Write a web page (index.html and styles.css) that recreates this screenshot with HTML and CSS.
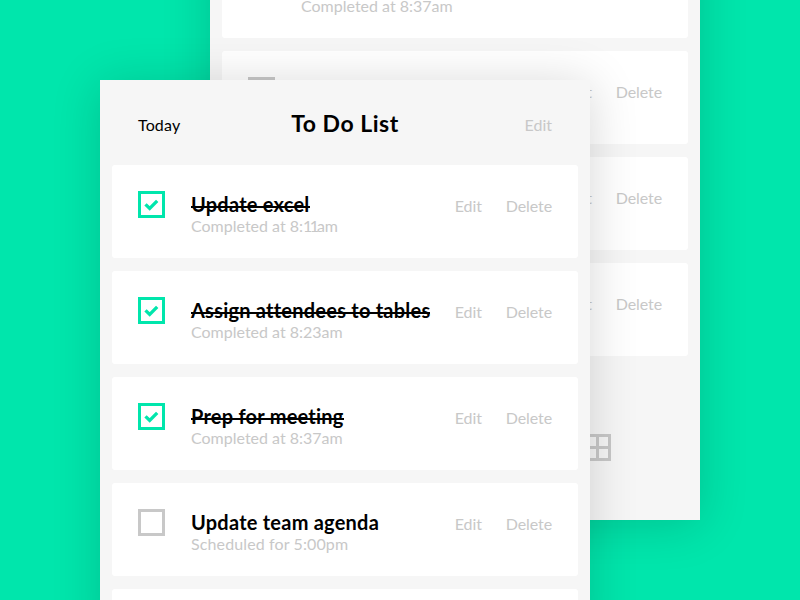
FILE: index.html
```
<!DOCTYPE html>
<html lang="en">
<head>
<meta charset="utf-8">
<title>To Do List</title>
<link rel="stylesheet" href="styles.css">
</head>
<body>
<main class="stage">
  <section class="window window-back">
    <ul class="tasks">
      <li class="task task-cut">
        <div class="info"><p class="time">Completed at 8:37am</p></div>
      </li>
      <li class="task"><span class="box"></span><div class="info"></div><div class="actions"><a>Edit</a><a>Delete</a></div></li>
      <li class="task"><span class="box"></span><div class="info"></div><div class="actions"><a>Edit</a><a>Delete</a></div></li>
      <li class="task"><span class="box"></span><div class="info"></div><div class="actions"><a>Edit</a><a>Delete</a></div></li>
    </ul>
    <footer class="tabs">
      <svg class="grid-icon" viewBox="0 0 27 27"><path d="M1.5 1.5h24v24h-24zM13.5 1.5v24M1.5 13.5h24"/></svg>
    </footer>
  </section>

  <section class="window window-front">
    <header class="header">
      <span class="today">Today</span>
      <h1 class="title">To Do List</h1>
      <a class="edit">Edit</a>
    </header>
    <ul class="tasks">
      <li class="task done">
        <span class="box"><svg class="check" viewBox="0 0 21 21"><path d="M4.5 10.3l4.2 4.2 7.5-7.6"/></svg></span>
        <div class="info"><h2 class="name">Update excel</h2><p class="time">Completed at 8:<span class="ones">11</span>am</p></div>
        <div class="actions"><a>Edit</a><a>Delete</a></div>
      </li>
      <li class="task done">
        <span class="box"><svg class="check" viewBox="0 0 21 21"><path d="M4.5 10.3l4.2 4.2 7.5-7.6"/></svg></span>
        <div class="info"><h2 class="name">Assign attendees to tables</h2><p class="time">Completed at 8:23am</p></div>
        <div class="actions"><a>Edit</a><a>Delete</a></div>
      </li>
      <li class="task done">
        <span class="box"><svg class="check" viewBox="0 0 21 21"><path d="M4.5 10.3l4.2 4.2 7.5-7.6"/></svg></span>
        <div class="info"><h2 class="name">Prep for meeting</h2><p class="time">Completed at 8:37am</p></div>
        <div class="actions"><a>Edit</a><a>Delete</a></div>
      </li>
      <li class="task">
        <span class="box"></span>
        <div class="info"><h2 class="name">Update team agenda</h2><p class="time scheduled">Scheduled for 5:00pm</p></div>
        <div class="actions"><a>Edit</a><a>Delete</a></div>
      </li>
      <li class="task"></li>
    </ul>
  </section>
</main>
</body>
</html>
```
FILE: styles.css
```
* { box-sizing: border-box; }

body {
  margin: 0;
  font-family: Lato, "Liberation Sans", sans-serif;
  font-size: 16px;
  color: #000;
}

h1, h2, p, ul { margin: 0; padding: 0; }

.stage {
  position: relative;
  width: 800px;
  height: 600px;
  overflow: hidden;
  background: #00e6ac;
}

.window {
  position: absolute;
  width: 490px;
  padding: 0 12px;
  background: #f6f6f6;
  box-shadow: 0 4px 46px rgba(0, 0, 0, 0.16);
}

.window-back { left: 210px; top: -55px; height: 575px; }
.window-front { left: 100px; top: 80px; height: 560px; }

.header {
  display: grid;
  grid-template-columns: 1fr auto 1fr;
  align-items: center;
  height: 85px;
  padding: 4px 26px 0;
}

.today { letter-spacing: 0.15px; }
.title { font-size: 23px; line-height: 30px; font-weight: 700; letter-spacing: 0.5px; padding-bottom: 3px; }
.edit { justify-self: end; color: #c8c8c8; }

.tasks {
  display: flex;
  flex-direction: column;
  gap: 13px;
  list-style: none;
}

.task {
  display: flex;
  flex: none;
  height: 93px;
  padding: 26px 26px 0;
  border-radius: 3px;
  background: #fff;
}

.task-cut { padding: 48px 26px 0 53px; }

.box {
  flex: none;
  width: 27px;
  height: 27px;
  border: 3px solid #c8c8c8;
}

.done .box { border-color: #00e6ac; }

.check {
  display: block;
  width: 21px;
  height: 21px;
  fill: none;
  stroke: #00e6ac;
  stroke-width: 3.3;
}

.info { flex: 1; padding: 2px 0 0 26px; white-space: nowrap; }

.name {
  position: relative;
  width: max-content;
  font-size: 20px;
  line-height: 22px;
  font-weight: 700;
  letter-spacing: 0.23px;
}

.done .name::after {
  content: "";
  position: absolute;
  left: 0;
  right: 0;
  top: 13px;
  height: 2px;
  background: #000;
}

.time { padding-top: 1px; line-height: 20px; color: #c8c8c8; }
.scheduled { letter-spacing: 0.12px; }
.ones { letter-spacing: -2.5px; margin-right: 0.3px; }

.actions {
  display: flex;
  gap: 24px;
  padding-top: 5px;
  line-height: 20px;
  letter-spacing: -0.1px;
  color: #c8c8c8;
}

.tabs { display: flex; justify-content: center; padding: 78px 0 0 285px; }

.grid-icon {
  width: 27px;
  height: 27px;
  fill: none;
  stroke: #c8c8c8;
  stroke-width: 3;
}
```
